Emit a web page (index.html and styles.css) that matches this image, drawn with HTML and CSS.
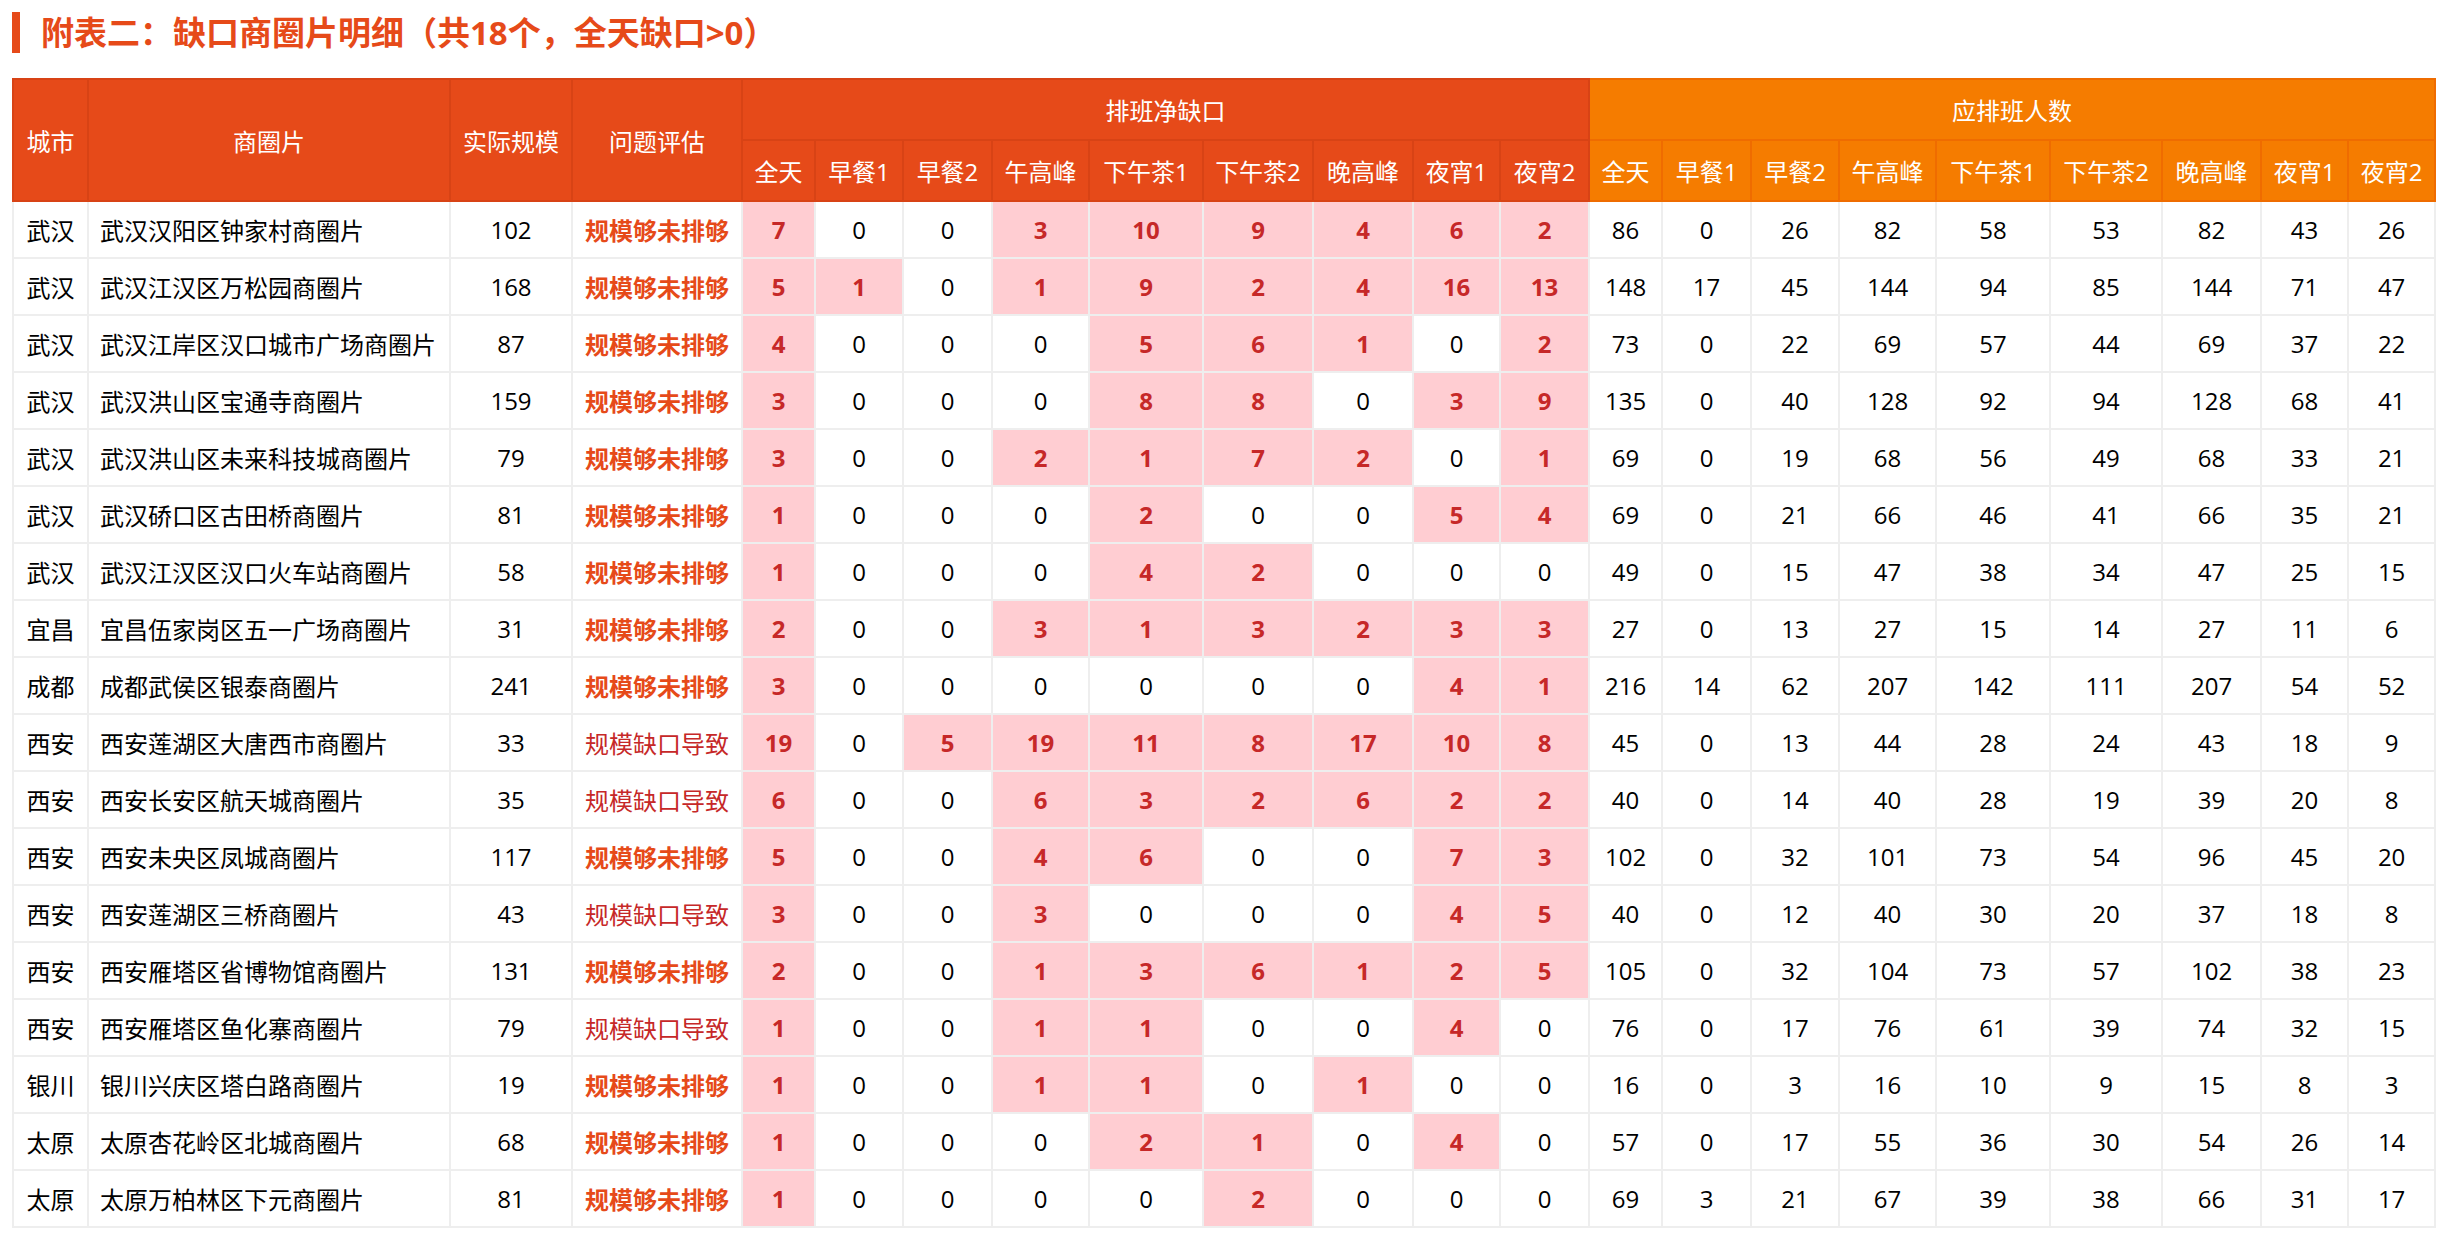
FILE: index.html
```html
<!DOCTYPE html>
<html lang="zh-CN">
<head>
<meta charset="utf-8">
<title>附表二</title>
<link rel="stylesheet" href="styles.css">
</head>
<body>
<h2 class="title">附表二：缺口商圈片明细（共18个，全天缺口&gt;0）</h2>
<table class="grid">
<colgroup>
<col style="width:75px"><col style="width:362px"><col style="width:122px"><col style="width:170px">
<col style="width:73px"><col style="width:88px"><col style="width:89px"><col style="width:97px"><col style="width:114px"><col style="width:110px"><col style="width:100px"><col style="width:87px"><col style="width:89px">
<col style="width:73px"><col style="width:89px"><col style="width:88px"><col style="width:97px"><col style="width:114px"><col style="width:112px"><col style="width:99px"><col style="width:87px"><col style="width:87px">
</colgroup>
<thead>
<tr class="h1">
<th rowspan="2">城市</th><th rowspan="2">商圈片</th><th rowspan="2">实际规模</th><th rowspan="2">问题评估</th>
<th colspan="9">排班净缺口</th>
<th colspan="9" class="o">应排班人数</th>
</tr>
<tr class="h2">
<th>全天</th><th>早餐1</th><th>早餐2</th><th>午高峰</th><th>下午茶1</th><th>下午茶2</th><th>晚高峰</th><th>夜宵1</th><th>夜宵2</th>
<th class="o">全天</th><th class="o">早餐1</th><th class="o">早餐2</th><th class="o">午高峰</th><th class="o">下午茶1</th><th class="o">下午茶2</th><th class="o">晚高峰</th><th class="o">夜宵1</th><th class="o">夜宵2</th>
</tr>
</thead>
<tbody>
<tr><td>武汉</td><td class="name">武汉汉阳区钟家村商圈片</td><td>102</td><td class="ev">规模够未排够</td><td class="p">7</td><td>0</td><td>0</td><td class="p">3</td><td class="p">10</td><td class="p">9</td><td class="p">4</td><td class="p">6</td><td class="p">2</td><td>86</td><td>0</td><td>26</td><td>82</td><td>58</td><td>53</td><td>82</td><td>43</td><td>26</td></tr>
<tr><td>武汉</td><td class="name">武汉江汉区万松园商圈片</td><td>168</td><td class="ev">规模够未排够</td><td class="p">5</td><td class="p">1</td><td>0</td><td class="p">1</td><td class="p">9</td><td class="p">2</td><td class="p">4</td><td class="p">16</td><td class="p">13</td><td>148</td><td>17</td><td>45</td><td>144</td><td>94</td><td>85</td><td>144</td><td>71</td><td>47</td></tr>
<tr><td>武汉</td><td class="name">武汉江岸区汉口城市广场商圈片</td><td>87</td><td class="ev">规模够未排够</td><td class="p">4</td><td>0</td><td>0</td><td>0</td><td class="p">5</td><td class="p">6</td><td class="p">1</td><td>0</td><td class="p">2</td><td>73</td><td>0</td><td>22</td><td>69</td><td>57</td><td>44</td><td>69</td><td>37</td><td>22</td></tr>
<tr><td>武汉</td><td class="name">武汉洪山区宝通寺商圈片</td><td>159</td><td class="ev">规模够未排够</td><td class="p">3</td><td>0</td><td>0</td><td>0</td><td class="p">8</td><td class="p">8</td><td>0</td><td class="p">3</td><td class="p">9</td><td>135</td><td>0</td><td>40</td><td>128</td><td>92</td><td>94</td><td>128</td><td>68</td><td>41</td></tr>
<tr><td>武汉</td><td class="name">武汉洪山区未来科技城商圈片</td><td>79</td><td class="ev">规模够未排够</td><td class="p">3</td><td>0</td><td>0</td><td class="p">2</td><td class="p">1</td><td class="p">7</td><td class="p">2</td><td>0</td><td class="p">1</td><td>69</td><td>0</td><td>19</td><td>68</td><td>56</td><td>49</td><td>68</td><td>33</td><td>21</td></tr>
<tr><td>武汉</td><td class="name">武汉硚口区古田桥商圈片</td><td>81</td><td class="ev">规模够未排够</td><td class="p">1</td><td>0</td><td>0</td><td>0</td><td class="p">2</td><td>0</td><td>0</td><td class="p">5</td><td class="p">4</td><td>69</td><td>0</td><td>21</td><td>66</td><td>46</td><td>41</td><td>66</td><td>35</td><td>21</td></tr>
<tr><td>武汉</td><td class="name">武汉江汉区汉口火车站商圈片</td><td>58</td><td class="ev">规模够未排够</td><td class="p">1</td><td>0</td><td>0</td><td>0</td><td class="p">4</td><td class="p">2</td><td>0</td><td>0</td><td>0</td><td>49</td><td>0</td><td>15</td><td>47</td><td>38</td><td>34</td><td>47</td><td>25</td><td>15</td></tr>
<tr><td>宜昌</td><td class="name">宜昌伍家岗区五一广场商圈片</td><td>31</td><td class="ev">规模够未排够</td><td class="p">2</td><td>0</td><td>0</td><td class="p">3</td><td class="p">1</td><td class="p">3</td><td class="p">2</td><td class="p">3</td><td class="p">3</td><td>27</td><td>0</td><td>13</td><td>27</td><td>15</td><td>14</td><td>27</td><td>11</td><td>6</td></tr>
<tr><td>成都</td><td class="name">成都武侯区银泰商圈片</td><td>241</td><td class="ev">规模够未排够</td><td class="p">3</td><td>0</td><td>0</td><td>0</td><td>0</td><td>0</td><td>0</td><td class="p">4</td><td class="p">1</td><td>216</td><td>14</td><td>62</td><td>207</td><td>142</td><td>111</td><td>207</td><td>54</td><td>52</td></tr>
<tr><td>西安</td><td class="name">西安莲湖区大唐西市商圈片</td><td>33</td><td class="ev2">规模缺口导致</td><td class="p">19</td><td>0</td><td class="p">5</td><td class="p">19</td><td class="p">11</td><td class="p">8</td><td class="p">17</td><td class="p">10</td><td class="p">8</td><td>45</td><td>0</td><td>13</td><td>44</td><td>28</td><td>24</td><td>43</td><td>18</td><td>9</td></tr>
<tr><td>西安</td><td class="name">西安长安区航天城商圈片</td><td>35</td><td class="ev2">规模缺口导致</td><td class="p">6</td><td>0</td><td>0</td><td class="p">6</td><td class="p">3</td><td class="p">2</td><td class="p">6</td><td class="p">2</td><td class="p">2</td><td>40</td><td>0</td><td>14</td><td>40</td><td>28</td><td>19</td><td>39</td><td>20</td><td>8</td></tr>
<tr><td>西安</td><td class="name">西安未央区凤城商圈片</td><td>117</td><td class="ev">规模够未排够</td><td class="p">5</td><td>0</td><td>0</td><td class="p">4</td><td class="p">6</td><td>0</td><td>0</td><td class="p">7</td><td class="p">3</td><td>102</td><td>0</td><td>32</td><td>101</td><td>73</td><td>54</td><td>96</td><td>45</td><td>20</td></tr>
<tr><td>西安</td><td class="name">西安莲湖区三桥商圈片</td><td>43</td><td class="ev2">规模缺口导致</td><td class="p">3</td><td>0</td><td>0</td><td class="p">3</td><td>0</td><td>0</td><td>0</td><td class="p">4</td><td class="p">5</td><td>40</td><td>0</td><td>12</td><td>40</td><td>30</td><td>20</td><td>37</td><td>18</td><td>8</td></tr>
<tr><td>西安</td><td class="name">西安雁塔区省博物馆商圈片</td><td>131</td><td class="ev">规模够未排够</td><td class="p">2</td><td>0</td><td>0</td><td class="p">1</td><td class="p">3</td><td class="p">6</td><td class="p">1</td><td class="p">2</td><td class="p">5</td><td>105</td><td>0</td><td>32</td><td>104</td><td>73</td><td>57</td><td>102</td><td>38</td><td>23</td></tr>
<tr><td>西安</td><td class="name">西安雁塔区鱼化寨商圈片</td><td>79</td><td class="ev2">规模缺口导致</td><td class="p">1</td><td>0</td><td>0</td><td class="p">1</td><td class="p">1</td><td>0</td><td>0</td><td class="p">4</td><td>0</td><td>76</td><td>0</td><td>17</td><td>76</td><td>61</td><td>39</td><td>74</td><td>32</td><td>15</td></tr>
<tr><td>银川</td><td class="name">银川兴庆区塔白路商圈片</td><td>19</td><td class="ev">规模够未排够</td><td class="p">1</td><td>0</td><td>0</td><td class="p">1</td><td class="p">1</td><td>0</td><td class="p">1</td><td>0</td><td>0</td><td>16</td><td>0</td><td>3</td><td>16</td><td>10</td><td>9</td><td>15</td><td>8</td><td>3</td></tr>
<tr><td>太原</td><td class="name">太原杏花岭区北城商圈片</td><td>68</td><td class="ev">规模够未排够</td><td class="p">1</td><td>0</td><td>0</td><td>0</td><td class="p">2</td><td class="p">1</td><td>0</td><td class="p">4</td><td>0</td><td>57</td><td>0</td><td>17</td><td>55</td><td>36</td><td>30</td><td>54</td><td>26</td><td>14</td></tr>
<tr><td>太原</td><td class="name">太原万柏林区下元商圈片</td><td>81</td><td class="ev">规模够未排够</td><td class="p">1</td><td>0</td><td>0</td><td>0</td><td>0</td><td class="p">2</td><td>0</td><td>0</td><td>0</td><td>69</td><td>3</td><td>21</td><td>67</td><td>39</td><td>38</td><td>66</td><td>31</td><td>17</td></tr>
</tbody>
</table>
</body>
</html>
```
FILE: styles.css
```css
html, body {
  margin: 0;
  padding: 0;
  background: #ffffff;
}
body {
  padding: 12px;
  font-family: "Open Sans", "Noto Sans CJK SC", sans-serif;
  color: #000000;
}
.title {
  margin: 0 0 25px 0;
  height: 41px;
  line-height: 41px;
  border-left: 8px solid #e64a19;
  padding-left: 21px;
  font-size: 33px;
  font-weight: 700;
  color: #e64a19;
  font-family: "Open Sans", "Noto Sans CJK SC", sans-serif;
}
.grid {
  table-layout: fixed;
  width: 2422px;
  border-collapse: collapse;
  font-size: 24px;
}
.grid th {
  background: #e64a19;
  color: #ffffff;
  font-weight: 400;
  border: 2px solid #d84315;
  height: 59px;
  padding: 0;
  text-align: center;
  vertical-align: middle;
  white-space: nowrap;
}
.grid th.o {
  background: #f57c00;
  border-color: #ef6c00;
}
.grid td {
  border: 2px solid #eeeeee;
  height: 55px;
  padding: 0;
  text-align: center;
  vertical-align: middle;
  white-space: nowrap;
  color: #000000;
}
.grid td.name {
  text-align: left;
  padding-left: 11px;
}
.grid td.ev {
  color: #e64a19;
  font-weight: 700;
}
.grid td.ev2 {
  color: #c62828;
  font-weight: 400;
}
.grid td.p {
  background: #ffcdd2;
  color: #c62828;
  font-weight: 700;
}
```
